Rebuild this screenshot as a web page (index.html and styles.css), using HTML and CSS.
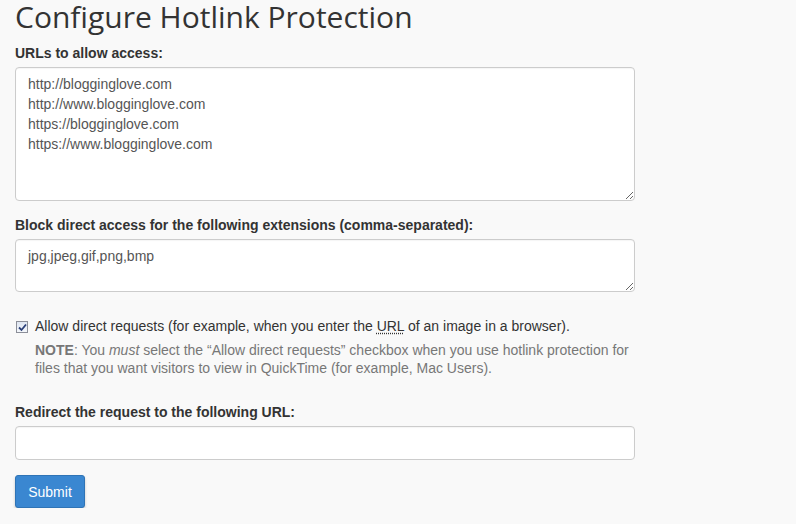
FILE: index.html
```html
<!DOCTYPE html>
<html>
<head>
<meta charset="utf-8">
<link rel="stylesheet" href="styles.css">
</head>
<body>
<div class="page">
  <h1 class="title">Configure Hotlink Protection</h1>
  <form class="form">
    <div class="group group-urls">
      <label class="label">URLs to allow access:</label>
      <textarea class="field area-urls">http://blogginglove.com
http://www.blogginglove.com
https://blogginglove.com
https://www.blogginglove.com</textarea>
    </div>
    <div class="group group-ext">
      <label class="label">Block direct access for the following extensions (comma-separated):</label>
      <textarea class="field area-ext">jpg,jpeg,gif,png,bmp</textarea>
    </div>
    <div class="group group-check">
      <div class="check-row">
        <span class="checkbox"><svg width="9" height="9" viewBox="0 0 9 9"><path d="M1 4.5 L3.5 7 L8 1.5" fill="none" stroke="#2a3f78" stroke-width="1.8"/></svg></span>
        <span class="check-text">Allow direct requests (for example, when you enter the <abbr class="abbr" title="Uniform Resource Locator">URL</abbr> of an image in a browser).</span>
      </div>
      <p class="note"><strong>NOTE</strong>: You <em>must</em> select the “Allow direct requests” checkbox when you use hotlink protection for files that you want visitors to view in QuickTime (for example, Mac Users).</p>
    </div>
    <div class="group group-redirect">
      <label class="label">Redirect the request to the following URL:</label>
      <input class="field input-url" type="text">
    </div>
    <button class="btn" type="button">Submit</button>
  </form>
</div>
</body>
</html>
```

FILE: styles.css
```css
html, body {
  margin: 0;
  padding: 0;
  background: #f9f9f9;
}
body {
  font-family: "Liberation Sans", Arial, sans-serif;
  font-size: 14px;
  line-height: 20px;
  color: #333;
}
.page {
  padding: 0 15px;
}
.title {
  margin: 0 0 11px 0;
  padding-top: 1px;
  font-family: "Open Sans", sans-serif;
  font-weight: 400;
  font-size: 30px;
  line-height: 31px;
  color: #333;
}
.form {
  width: 620px;
}
.label {
  display: block;
  font-weight: bold;
  margin-bottom: 4px;
  color: #333;
}
.field {
  display: block;
  box-sizing: border-box;
  width: 100%;
  margin: 0;
  font-family: "Liberation Sans", Arial, sans-serif;
  font-size: 14px;
  line-height: 20px;
  color: #555;
  background: #fff;
  border: 1px solid #ccc;
  border-radius: 4px;
  padding: 6px 12px 8px;
  box-shadow: inset 0 1px 1px rgba(0,0,0,0.04);
  outline: none;
}
.area-urls {
  height: 134px;
  resize: vertical;
}
.area-ext {
  height: 53px;
  resize: vertical;
}
.group-urls {
  margin-bottom: 14px;
}
.group-ext {
  margin-bottom: 24px;
}
.check-row {
  display: flex;
  align-items: flex-start;
  gap: 7px;
}
.checkbox {
  flex: none;
  box-sizing: border-box;
  width: 12px;
  height: 12px;
  margin: 5px 0 0 1px;
  border: 1px solid #8c8f99;
  background: linear-gradient(#dfe6f2, #f4f7fb);
  display: flex;
  align-items: center;
  justify-content: center;
}
.checkbox svg {
  display: block;
}
.check-text {
  color: #333;
}
.abbr {
  text-decoration: underline dotted;
  text-underline-offset: 2px;
  cursor: help;
}
.note {
  margin: 5px 0 0 20px;
  line-height: 18px;
  color: #777;
}
.note strong {
  font-weight: bold;
}
.group-check {
  margin-bottom: 25px;
}
.input-url {
  height: 34px;
  padding: 6px 12px;
}
.group-redirect {
  margin-bottom: 15px;
}
.btn {
  display: block;
  box-sizing: border-box;
  width: 70px;
  height: 33px;
  padding: 0;
  font-family: "Liberation Sans", Arial, sans-serif;
  font-size: 14px;
  color: #fff;
  background: #3a87d1;
  border: 1px solid #2f74b6;
  border-radius: 3px;
  box-shadow: 0 2px 3px rgba(0,0,0,0.2);
  cursor: pointer;
}
```
